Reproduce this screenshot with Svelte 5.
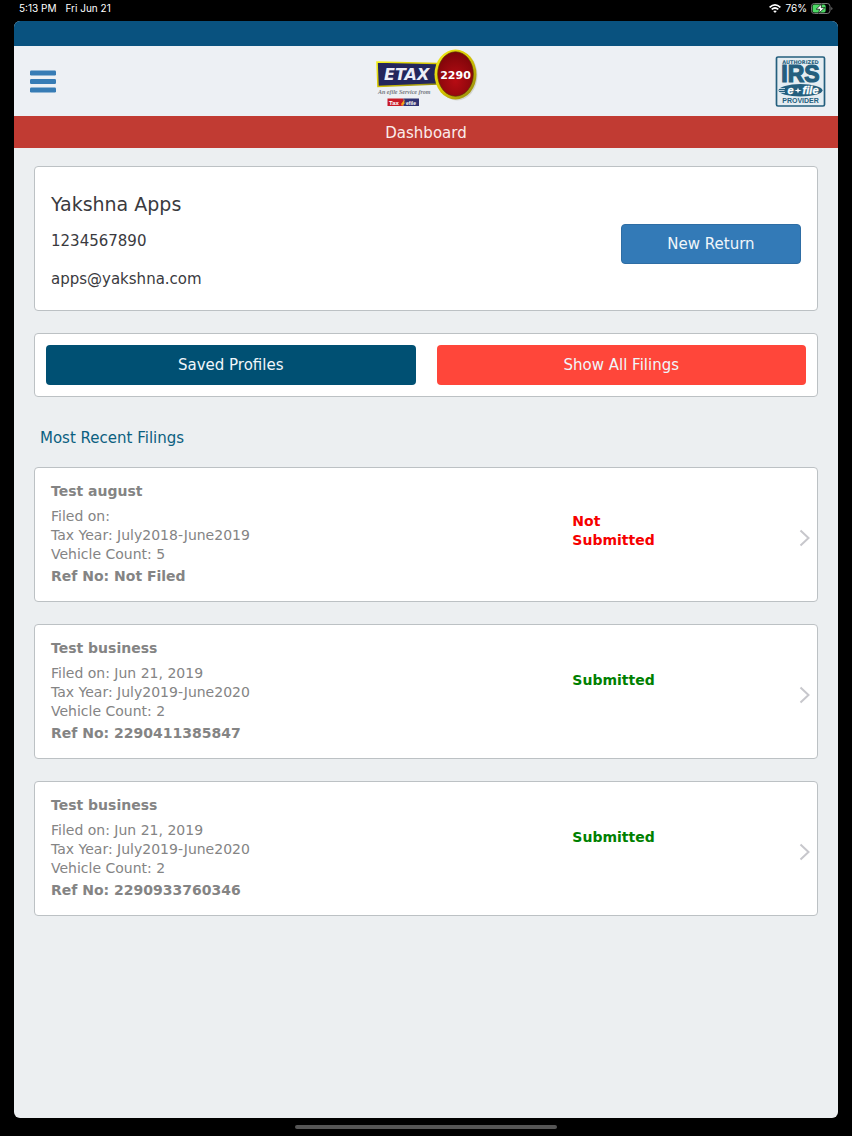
<script>
	const profile = {
		name: 'Yakshna Apps',
		phone: '1234567890',
		email: 'apps@yakshna.com'
	}

	const filings = [
		{ id: 1, business: 'Test august', filedOn: '', taxYear: 'July2018-June2019', vehicles: 5, refNo: 'Not Filed', submitted: false },
		{ id: 2, business: 'Test business', filedOn: 'Jun 21, 2019', taxYear: 'July2019-June2020', vehicles: 2, refNo: '2290411385847', submitted: true },
		{ id: 3, business: 'Test business', filedOn: 'Jun 21, 2019', taxYear: 'July2019-June2020', vehicles: 2, refNo: '2290933760346', submitted: true }
	]
</script>

<style>
	:global(body) {
		background: #000;
		margin: 0;
	}
	.screen {
		box-sizing: border-box;
		color: #3a3a3e;
		display: flex;
		flex-direction: column;
		font-family: Verdana, "DejaVu Sans", sans-serif;
		font-size: 15px;
		min-height: 100vh;
		padding: 0 14px;
	}
	.device {
		align-items: center;
		color: #fff;
		display: flex;
		font: 10px/17px Inter, sans-serif;
		gap: 9px;
		height: 17px;
		padding: 0 5px 4px;
	}
	.power {
		align-items: center;
		display: flex;
		gap: 4px;
		margin-left: auto;
	}
	.app {
		background: #eceff1;
		border-radius: 6px;
		display: flex;
		flex: 1;
		flex-direction: column;
		overflow: hidden;
	}
	.strip {
		background: #09527f;
		height: 25px;
	}
	header {
		align-items: center;
		background: #edf0f4;
		display: grid;
		grid-template-columns: 1fr auto 1fr;
		height: 70px;
		padding: 0 12px 0 16px;
	}
	header svg {
		display: block;
	}
	.menu {
		background: none;
		border: 0;
		cursor: pointer;
		justify-self: start;
		padding: 0;
	}
	.irs {
		justify-self: end;
	}
	h1 {
		background: #c13b33;
		color: #fbeceb;
		font-size: 15px;
		font-weight: normal;
		line-height: 32px;
		margin: 0;
		padding-top: 1px;
		height: 31px;
		text-align: center;
	}
	main {
		display: flex;
		flex-direction: column;
		gap: 22px;
		padding: 18px 20px;
	}
	.card {
		background: #fff;
		border: 1px solid #bcc1c4;
		border-radius: 4px;
		box-sizing: border-box;
	}
	.profile {
		align-items: center;
		display: flex;
		justify-content: space-between;
		padding: 23px 16px 12px;
	}
	h2 {
		font-size: 19px;
		font-weight: normal;
		line-height: 28px;
		margin: 0 0 4px;
	}
	.profile p {
		line-height: 38px;
		margin: 0;
	}
	.btn {
		border: 0;
		border-radius: 4px;
		color: #f0f6fa;
		cursor: pointer;
		font: inherit;
		height: 40px;
	}
	.new {
		background: #337ab7;
		border: 1px solid #2e6da4;
		width: 180px;
	}
	.actions {
		display: grid;
		gap: 21px;
		grid-template-columns: 1fr 1fr;
		padding: 11px;
	}
	.saved {
		background: #005073;
	}
	.all {
		background: #ff463a;
	}
	h3 {
		color: #0b6080;
		font-size: 15px;
		font-weight: normal;
		line-height: 22px;
		margin: 8px 6px -4px;
	}
	ul {
		display: flex;
		flex-direction: column;
		gap: 22px;
		list-style: none;
		margin: 0;
		padding: 0;
	}
	.filing {
		color: #848484;
		display: grid;
		font-size: 14px;
		grid-template-columns: 2fr 1fr;
		line-height: 19px;
		padding: 14px 0 15px;
		position: relative;
		text-decoration: none;
	}
	.filing > div {
		padding: 0 16px;
	}
	.filing strong {
		display: block;
	}
	.business {
		padding-bottom: 6px;
	}
	.ref {
		padding-top: 3px;
	}
	.filing .status {
		color: #f60000;
		font-weight: bold;
		padding-top: 30px;
	}
	.filing .status.submitted {
		color: #008000;
		padding-top: 32px;
	}
	.status span {
		display: block;
		max-width: 100px;
	}
	.chevron {
		position: absolute;
		right: 6px;
		top: calc(50% - 6px);
	}
	footer {
		display: flex;
		height: 18px;
		justify-content: center;
	}
	.home {
		background: #555;
		border-radius: 2px;
		height: 4px;
		margin-top: 7px;
		width: 262px;
	}
</style>

<div class="screen">
	<div class="device">
		<span>5:13 PM</span>
		<span>Fri Jun 21</span>
		<div class="power">
			<svg width="12" height="9" viewBox="0 0 12 9" fill="none" stroke="#fff" stroke-width="1.7" aria-hidden="true">
				<path d="M.6 3.3Q6-1.4 11.4 3.3M2.7 5.4Q6 2.6 9.3 5.4" />
				<path d="M6 9 4.2 7.1Q6 5.7 7.8 7.1Z" fill="#fff" stroke="none" />
			</svg>
			<span>76%</span>
			<svg width="22" height="11" viewBox="0 0 22 11" aria-hidden="true">
				<rect x=".5" y=".5" width="18.5" height="10" rx="2.8" fill="none" stroke="#777" />
				<rect x="1.6" y="1.6" width="13" height="7.8" rx="1.6" fill="#4cd964" />
				<path d="M20.3 3.9v3.2q1.2-.5 1.2-1.6t-1.2-1.6Z" fill="#777" />
				<path d="M10.8.8 5.2 6.2h3.5L7.6 10.3l6.2-5.6h-3.6Z" fill="#fff" stroke="#000" stroke-width=".7" />
			</svg>
		</div>
	</div>

	<div class="app">
		<div class="strip"></div>
		<header>
			<button class="menu" aria-label="Menu">
				<svg width="26" height="24" viewBox="0 0 26 24" fill="#377cb5">
					<rect y="1.5" width="26" height="5" rx="1.2" />
					<rect y="10" width="26" height="5" rx="1.2" />
					<rect y="18.5" width="26" height="5" rx="1.2" />
				</svg>
			</button>

			<svg width="106" height="64" viewBox="0 0 106 64" role="img" aria-label="ETAX 2290">
				<defs>
					<radialGradient id="ball" cx="50%" cy="65%" r="65%">
						<stop offset="0" stop-color="#b80c14" />
						<stop offset="1" stop-color="#7c0509" />
					</radialGradient>
					<linearGradient id="rim" x1="0" x2="1" y2="1">
						<stop offset="0" stop-color="#f4f11c" />
						<stop offset=".5" stop-color="#d5c400" />
						<stop offset="1" stop-color="#8b8312" />
					</linearGradient>
				</defs>
				<ellipse cx="82" cy="26.5" rx="20.5" ry="25" fill="#d4d5d2" />
				<path d="M2 13 62 14.500v20.500L3 37.500Z" fill="#23265c" stroke="url(#rim)" stroke-width="1.6" />
				<ellipse cx="80.5" cy="25.500" rx="21" ry="25" fill="url(#rim)" />
				<ellipse cx="80.5" cy="25" rx="17.8" ry="22.200" fill="url(#ball)" stroke="#5a3008" stroke-width=".7" />
				<text x="9" y="31" font-family="DejaVu Sans, sans-serif" font-size="16" font-weight="bold" font-style="italic" fill="#eceef8">ETAX</text>
				<text x="80.5" y="29.500" text-anchor="middle" font-family="DejaVu Sans, sans-serif" font-size="11" font-weight="bold" fill="#fff">2290</text>
				<text x="3" y="45" font-family="Liberation Serif, serif" font-size="6" font-weight="bold" font-style="italic" fill="#777b82">An efile Service from</text>
				<rect x="12.500" y="49.500" width="16" height="7.500" fill="#c81a28" />
				<rect x="28.500" y="49.500" width="15.500" height="7.500" fill="#303373" />
				<path d="m26 55 4-5-1 4 2-1-4 4Z" fill="#f6a51b" />
				<text x="14" y="55.500" font-family="Liberation Sans, sans-serif" font-size="6" font-weight="bold" fill="#fff">Tax</text>
				<text x="31" y="55.500" font-family="Liberation Sans, sans-serif" font-size="5" font-weight="bold" fill="#fff">efile</text>
			</svg>

			<svg class="irs" width="52" height="52" viewBox="0 0 52 52" role="img" aria-label="Authorized IRS e-file provider" font-family="Liberation Sans, sans-serif" font-weight="bold" fill="#245f7e" text-anchor="middle">
				<rect x="2.500" y="2" width="48" height="49" rx="1.500" fill="#e5edf2" stroke="#245f7e" stroke-width="1.7" />
				<text x="26.500" y="9" font-family="DejaVu Sans, sans-serif" font-size="5">AUTHORIZED</text>
				<text x="26.500" y="27" font-size="23" stroke="#245f7e" stroke-width="1.200">IRS</text>
				<ellipse cx="26.500" cy="35.300" rx="22" ry="6.200" />
				<path d="M5 33.500h6M4.500 35.500h6M5 37.500h6" stroke="#e5edf2" stroke-width=".8" />
				<text x="29" y="38.800" font-size="11" font-style="italic" fill="#fff" stroke="#fff" stroke-width=".3">e<tspan dx="9">file</tspan></text>
				<path d="m24 32.500.8 2.200 3 .8-3 .8-.8 2.200-.8-2.200-3-.8 3-.8Z" fill="#fff" />
				<text x="26.500" y="48.300" font-size="7">PROVIDER</text>
			</svg>
		</header>
		<h1>Dashboard</h1>

		<main>
			<section class="card profile">
				<div>
					<h2>{profile.name}</h2>
					<p>{profile.phone}</p>
					<p>{profile.email}</p>
				</div>
				<button class="btn new">New Return</button>
			</section>

			<div class="card actions">
				<button class="btn saved">Saved Profiles</button>
				<button class="btn all">Show All Filings</button>
			</div>

			<h3>Most Recent Filings</h3>

			<ul>
				{#each filings as filing (filing.id)}
				<li>
					<a class="card filing" href="#filing-{filing.id}">
						<div>
							<strong class="business">{filing.business}</strong>
							Filed on: {filing.filedOn}<br>
							Tax Year: {filing.taxYear}<br>
							Vehicle Count: {filing.vehicles}
							<strong class="ref">Ref No: {filing.refNo}</strong>
						</div>
						<div class="status" class:submitted={filing.submitted}>
							<span>{filing.submitted ? 'Submitted' : 'Not Submitted'}</span>
						</div>
						<svg class="chevron" width="12" height="18" viewBox="0 0 12 18" fill="none" stroke="#c7c7cc" stroke-width="2" aria-hidden="true">
							<path d="m1.5 1.5 8 7.5-8 7.5" />
						</svg>
					</a>
				</li>
				{/each}
			</ul>
		</main>
	</div>

	<footer><div class="home"></div></footer>
</div>
